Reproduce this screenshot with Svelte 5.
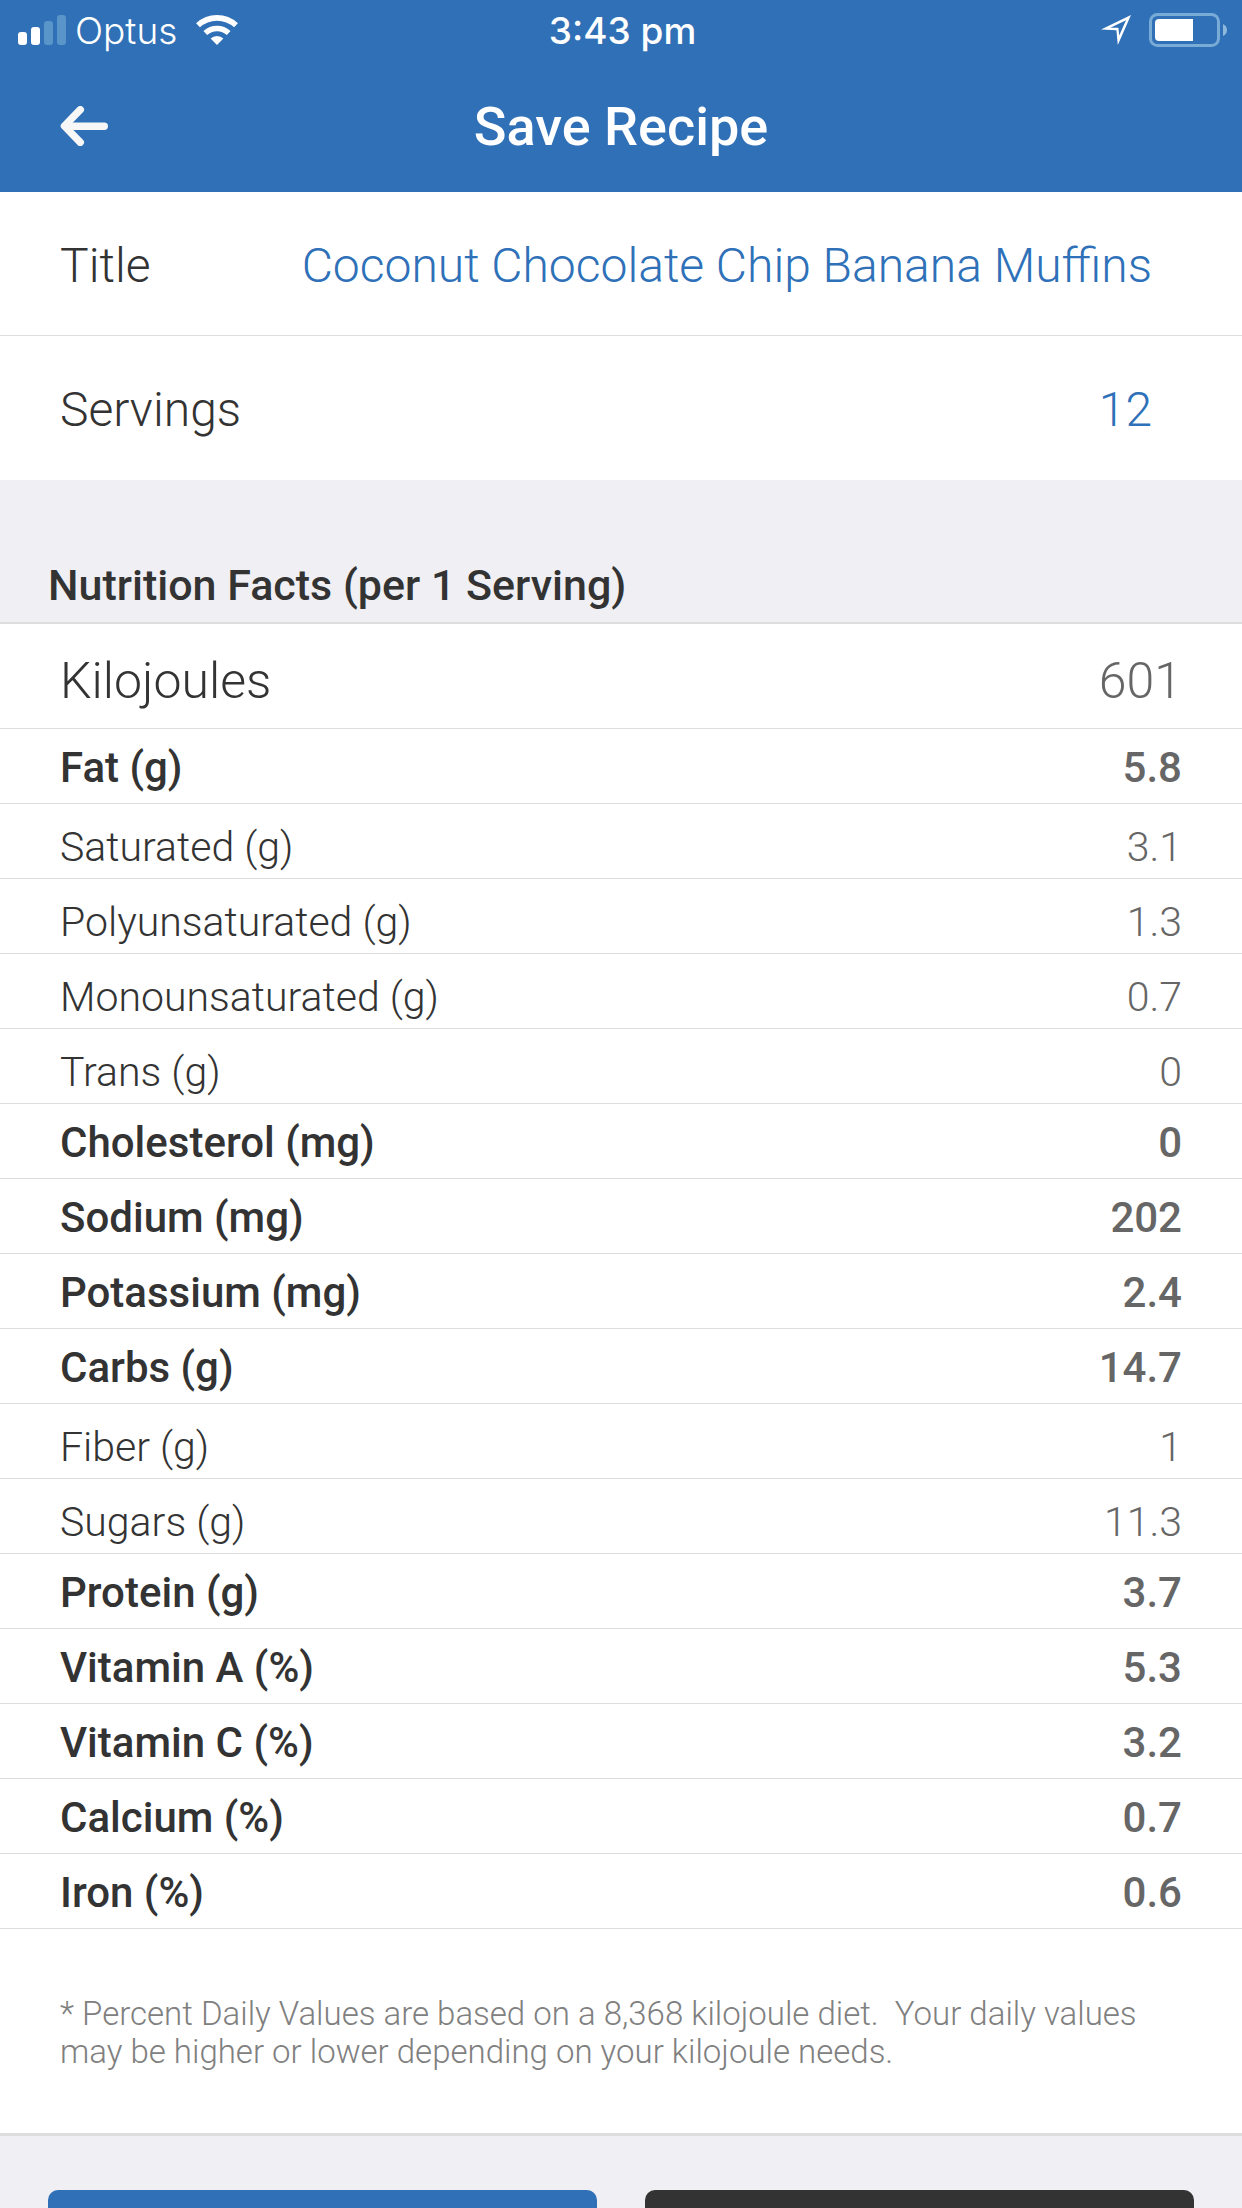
<script>
    let title = $state('Coconut Chocolate Chip Banana Muffins');
    let servings = $state('12');

    const energy = { label: 'Kilojoules', value: '601' };

    const nutrients = [
        { label: 'Fat (g)', value: '5.8' },
        { label: 'Saturated (g)', value: '3.1', sub: true },
        { label: 'Polyunsaturated (g)', value: '1.3', sub: true },
        { label: 'Monounsaturated (g)', value: '0.7', sub: true },
        { label: 'Trans (g)', value: '0', sub: true },
        { label: 'Cholesterol (mg)', value: '0' },
        { label: 'Sodium (mg)', value: '202' },
        { label: 'Potassium (mg)', value: '2.4' },
        { label: 'Carbs (g)', value: '14.7' },
        { label: 'Fiber (g)', value: '1', sub: true },
        { label: 'Sugars (g)', value: '11.3', sub: true },
        { label: 'Protein (g)', value: '3.7' },
        { label: 'Vitamin A (%)', value: '5.3' },
        { label: 'Vitamin C (%)', value: '3.2' },
        { label: 'Calcium (%)', value: '0.7' },
        { label: 'Iron (%)', value: '0.6' }
    ];
</script>

<div class="screen">
    <header>
        <div class="status-bar">
            <div class="status-left">
                <svg class="signal" width="48" height="30" viewBox="0 0 48 30" fill="#fff">
                    <rect x="0" y="17" width="9" height="13" rx="3" />
                    <rect x="13" y="12" width="9" height="18" rx="3" />
                    <rect x="26" y="6" width="9" height="24" rx="3" fill="#5995c9" />
                    <rect x="39" y="0" width="9" height="30" rx="3" fill="#5995c9" />
                </svg>
                <span class="carrier">Optus</span>
                <svg width="42" height="30" viewBox="0 0 42 30">
                    <path d="M2 10.3 A28 28 0 0 1 40 10.3" fill="none" stroke="#fff" stroke-width="5.6" />
                    <path d="M9.3 18 A17.3 17.3 0 0 1 32.7 18" fill="none" stroke="#fff" stroke-width="5.4" />
                    <path d="M14.6 23.6 A9.4 9.4 0 0 1 27.4 23.6 L21 30 Z" fill="#fff" />
                </svg>
            </div>
            <span class="clock">3:43 pm</span>
            <div class="status-right">
                <svg width="30" height="30" viewBox="0 0 30 30">
                    <path fill-rule="evenodd" d="M0 14.6 L30 0 L16.8 30 L15.4 15.2 Z M9.4 12.8 L25 5.2 L18.2 20.6 L17.4 12.8 Z" fill="#fff" />
                </svg>
                <svg width="78" height="34" viewBox="0 0 78 34">
                    <rect x="1.5" y="1.5" width="68" height="31" rx="7" fill="none" stroke="#79abd7" stroke-width="3" />
                    <path d="M10 6 H44 V28 H10 Q6 28 6 24 V10 Q6 6 10 6 Z" fill="#fff" />
                    <path d="M74 11 Q78 13 78 17 Q78 21 74 23 Z" fill="#8fb8dd" />
                </svg>
            </div>
        </div>
        <nav>
            <button class="back" aria-label="Back">
                <svg width="48" height="40" viewBox="0 0 48 40" fill="none" stroke="#f7f7f7" stroke-width="7.4" stroke-linecap="round" stroke-linejoin="round">
                    <path d="M20.3 3.7 L4.4 20 L20.3 36.3" />
                    <path d="M6 20.2 H44.3" />
                </svg>
            </button>
            <h1>Save Recipe</h1>
        </nav>
    </header>

    <main>
        <div class="field">
            <label for="title">Title</label>
            <input id="title" type="text" bind:value={title} />
        </div>
        <div class="field">
            <label for="servings">Servings</label>
            <input id="servings" type="text" inputmode="numeric" bind:value={servings} />
        </div>

        <h2>Nutrition Facts (per 1 Serving)</h2>

        <table>
            <tbody>
                <tr class="energy">
                    <th scope="row">{energy.label}</th>
                    <td>{energy.value}</td>
                </tr>
                {#each nutrients as nutrient}
                    <tr class:sub={nutrient.sub}>
                        <th scope="row">{nutrient.label}</th>
                        <td>{nutrient.value}</td>
                    </tr>
                {/each}
            </tbody>
        </table>

        <p class="note">
            * Percent Daily Values are based on a 8,368 kilojoule diet.&nbsp; Your daily values may be higher or lower depending on your kilojoule needs.
        </p>

        <div class="actions">
            <button class="btn-primary" aria-label="Save"></button>
            <button class="btn-secondary" aria-label="Cancel"></button>
        </div>
    </main>
</div>

<style>
    :global(body) {
        margin: 0;
        background: #efeff4;
    }

    .screen {
        display: flex;
        flex-direction: column;
        height: 100vh;
        font-family: Roboto, "Liberation Sans", sans-serif;
        font-weight: 300;
        color: #333;
    }

    header {
        flex: none;
        background: #3070b7;
        color: #fff;
    }

    .status-bar {
        display: grid;
        grid-template-columns: 1fr auto 1fr;
        align-items: center;
        height: 60px;
        padding: 0 15px 0 18px;
        font-family: Inter, sans-serif;
        font-size: 37px;
    }

    .status-left, .status-right {
        display: flex;
        align-items: center;
    }

    .status-left {
        gap: 19px;
    }

    .signal {
        margin-right: -10px;
    }

    .status-right {
        justify-content: flex-end;
        gap: 18px;
    }

    .clock {
        font-weight: 500;
    }

    nav {
        display: grid;
        grid-template-columns: 1fr auto 1fr;
        align-items: center;
        height: 132px;
        padding: 0 60px;
    }

    .back {
        display: flex;
        justify-self: start;
        padding: 0;
        background: none;
        border: none;
        cursor: pointer;
    }

    h1 {
        margin: 0;
        font-size: 54px;
        font-weight: 500;
    }

    main {
        flex: 1;
        min-height: 0;
        overflow-y: auto;
        scrollbar-width: none;
    }

    .field {
        display: flex;
        align-items: center;
        box-sizing: border-box;
        height: 144px;
        padding: 3px 90px 0 60px;
        background: #fff;
        font-size: 48px;
    }

    .field:first-child {
        border-bottom: 1px solid #dedede;
    }

    .field input {
        flex: 1;
        min-width: 0;
        padding: 0;
        border: none;
        outline: none;
        background: none;
        font: inherit;
        color: #2f71b8;
        text-align: right;
    }

    h2 {
        margin: 0;
        padding: 80px 48px 12px;
        border-bottom: 2px solid #dedede;
        font-size: 43px;
        line-height: 50px;
        font-weight: 500;
    }

    table {
        width: 100%;
        border-collapse: separate;
        border-spacing: 0;
        background: #fff;
        font-size: 42px;
        line-height: 50px;
    }

    th, td {
        box-sizing: border-box;
        height: 75px;
        padding: 4px 60px 0;
        border-bottom: 1px solid #dedede;
        font-weight: 500;
        text-align: left;
    }

    td {
        color: #666;
        text-align: right;
    }

    .sub th, .sub td {
        padding-top: 12px;
        font-size: 41px;
        font-weight: 300;
    }

    .energy th, .energy td {
        height: 105px;
        padding-top: 10px;
        font-size: 50px;
        font-weight: 300;
    }

    .note {
        margin: 0;
        padding: 66px 60px 62px;
        border-bottom: 3px solid #dedede;
        background: #fff;
        color: #808080;
        font-size: 33px;
        line-height: 38px;
    }

    .actions {
        display: grid;
        grid-template-columns: 1fr 1fr;
        gap: 48px;
        padding: 54px 48px;
    }

    .actions button {
        height: 132px;
        border: none;
        border-radius: 10px;
        cursor: pointer;
    }

    .btn-primary {
        background: #3070b7;
    }

    .btn-secondary {
        background: #333;
    }
</style>
